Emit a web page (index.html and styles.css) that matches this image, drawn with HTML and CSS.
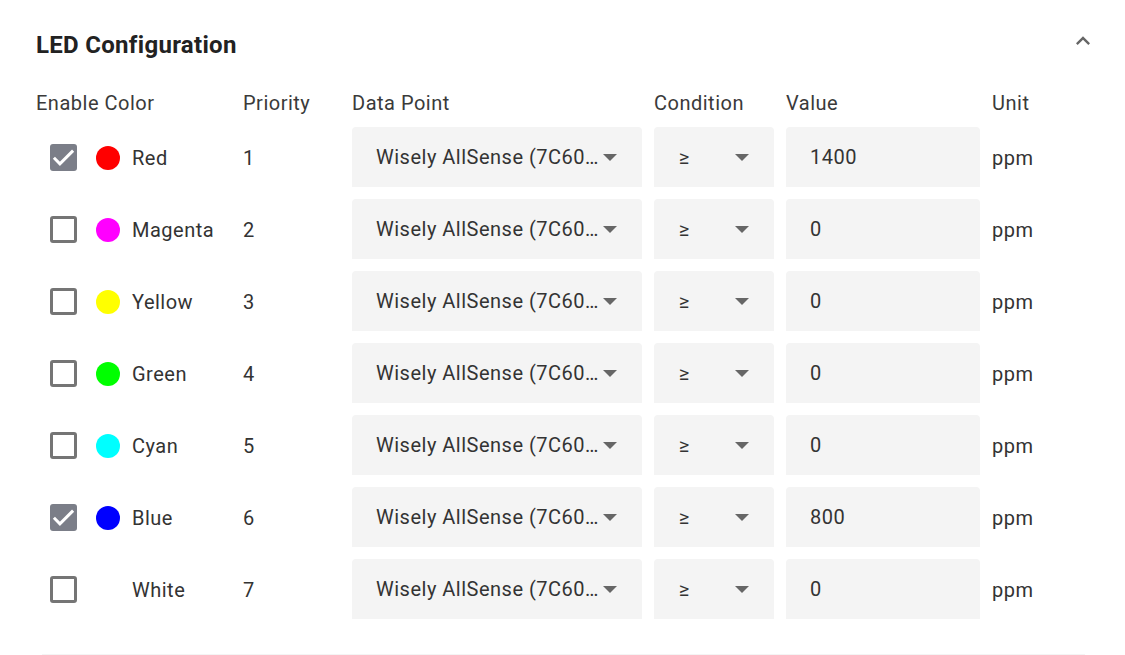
FILE: index.html
```html
<!DOCTYPE html>
<html>
<head>
<meta charset="utf-8">
<link rel="stylesheet" href="styles.css">
</head>
<body>
<div class="card">
  <div class="title-row">
    <h2 class="title">LED Configuration</h2>
    <svg class="chevron" viewBox="0 0 24 24" width="24" height="24"><path d="M12 8l-6 6 1.41 1.41L12 10.83l4.59 4.58L18 14z" fill="#666"/></svg>
  </div>
  <div class="grid">
    <div class="head">Enable Color</div>
    <div class="head">Priority</div>
    <div class="head">Data Point</div>
    <div class="head">Condition</div>
    <div class="head">Value</div>
    <div class="head">Unit</div>

    <div class="cell color-cell"><span class="cb checked"><svg viewBox="0 0 18 18"><path d="M2.6 9.2l4 4 8.8-8.8" fill="none" stroke="#fff" stroke-width="2"/></svg></span><span class="dot" style="background:#ff0000"></span><span>Red</span></div>
    <div class="cell">1</div>
    <div class="field select"><span class="txt">Wisely AllSense (7C60…</span><span class="arrow"></span></div>
    <div class="field select cond"><span class="txt">≥</span><span class="arrow"></span></div>
    <div class="field"><span class="txt">1400</span></div>
    <div class="cell">ppm</div>

    <div class="cell color-cell"><span class="cb"></span><span class="dot" style="background:#ff00ff"></span><span>Magenta</span></div>
    <div class="cell">2</div>
    <div class="field select"><span class="txt">Wisely AllSense (7C60…</span><span class="arrow"></span></div>
    <div class="field select cond"><span class="txt">≥</span><span class="arrow"></span></div>
    <div class="field"><span class="txt">0</span></div>
    <div class="cell">ppm</div>

    <div class="cell color-cell"><span class="cb"></span><span class="dot" style="background:#ffff00"></span><span>Yellow</span></div>
    <div class="cell">3</div>
    <div class="field select"><span class="txt">Wisely AllSense (7C60…</span><span class="arrow"></span></div>
    <div class="field select cond"><span class="txt">≥</span><span class="arrow"></span></div>
    <div class="field"><span class="txt">0</span></div>
    <div class="cell">ppm</div>

    <div class="cell color-cell"><span class="cb"></span><span class="dot" style="background:#00ff00"></span><span>Green</span></div>
    <div class="cell">4</div>
    <div class="field select"><span class="txt">Wisely AllSense (7C60…</span><span class="arrow"></span></div>
    <div class="field select cond"><span class="txt">≥</span><span class="arrow"></span></div>
    <div class="field"><span class="txt">0</span></div>
    <div class="cell">ppm</div>

    <div class="cell color-cell"><span class="cb"></span><span class="dot" style="background:#00ffff"></span><span>Cyan</span></div>
    <div class="cell">5</div>
    <div class="field select"><span class="txt">Wisely AllSense (7C60…</span><span class="arrow"></span></div>
    <div class="field select cond"><span class="txt">≥</span><span class="arrow"></span></div>
    <div class="field"><span class="txt">0</span></div>
    <div class="cell">ppm</div>

    <div class="cell color-cell"><span class="cb checked"><svg viewBox="0 0 18 18"><path d="M2.6 9.2l4 4 8.8-8.8" fill="none" stroke="#fff" stroke-width="2"/></svg></span><span class="dot" style="background:#0000ff"></span><span>Blue</span></div>
    <div class="cell">6</div>
    <div class="field select"><span class="txt">Wisely AllSense (7C60…</span><span class="arrow"></span></div>
    <div class="field select cond"><span class="txt">≥</span><span class="arrow"></span></div>
    <div class="field"><span class="txt">800</span></div>
    <div class="cell">ppm</div>

    <div class="cell color-cell"><span class="cb"></span><span class="dot" style="background:#ffffff"></span><span>White</span></div>
    <div class="cell">7</div>
    <div class="field select"><span class="txt">Wisely AllSense (7C60…</span><span class="arrow"></span></div>
    <div class="field select cond"><span class="txt">≥</span><span class="arrow"></span></div>
    <div class="field"><span class="txt">0</span></div>
    <div class="cell">ppm</div>
  </div>
  <div class="divider"></div>
</div>
</body>
</html>
```
FILE: styles.css
```css
html, body {
  margin: 0;
  padding: 0;
  background: #fff;
}
body {
  font-family: Roboto, "Liberation Sans", sans-serif;
  color: #333;
  width: 1125px;
  height: 655px;
  overflow: hidden;
}
.card {
  padding: 30px 0 0 36px;
}
.title-row {
  display: flex;
  align-items: center;
  justify-content: space-between;
  width: 1061px;
  height: 30px;
}
.title {
  margin: 0;
  font-size: 24px;
  font-weight: 700;
  line-height: 30px;
  letter-spacing: 0.3px;
  color: #222;
}
.chevron {
  width: 28px;
  height: 28px;
  margin-top: -8px;
}
.grid {
  margin-top: 31px;
  display: grid;
  grid-template-columns: 195px 97px 290px 120px 194px auto;
  grid-template-rows: 24px;
  grid-auto-rows: 60px;
  column-gap: 12px;
  row-gap: 12px;
  font-size: 20px;
  letter-spacing: 0.5px;
}
.head {
  line-height: 24px;
  color: #3a3a3a;
}
.cell {
  display: flex;
  align-items: center;
  padding-top: 1px;
}
.color-cell {
  padding-left: 14px;
}
.cb {
  box-sizing: border-box;
  width: 27px;
  height: 27px;
  border: 3px solid #757575;
  border-radius: 3px;
  display: inline-flex;
  align-items: center;
  justify-content: center;
  margin-right: 19px;
  flex: none;
}
.cb.checked {
  background: #7b7e88;
  border: 0;
}
.cb svg {
  width: 27px;
  height: 27px;
}
.dot {
  width: 24px;
  height: 24px;
  border-radius: 50%;
  margin-right: 12px;
  flex: none;
}
.field {
  background: #f4f4f4;
  border-radius: 4px 4px 0 0;
  display: flex;
  align-items: center;
  padding-left: 24px;
  padding-right: 25px;
}
.field .txt {
  flex: 1;
  white-space: nowrap;
  overflow: hidden;
}
.cond {
  padding-left: 25px;
}
.arrow {
  width: 0;
  height: 0;
  border-left: 7px solid transparent;
  border-right: 7px solid transparent;
  border-top: 7px solid #666;
}
.divider {
  margin: 35px 0 0 6px;
  width: 1043px;
  height: 1px;
  background: #f4f4f4;
}
```
